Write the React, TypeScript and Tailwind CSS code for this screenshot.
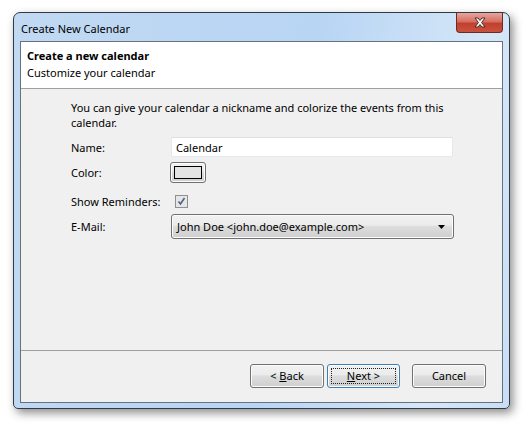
import React from "react";

function Win7Button({ children, focused, className = "" }: { children: React.ReactNode; focused?: boolean; className?: string }) {
  return (
    <div
      className={`relative flex items-center justify-center rounded-[3px] border ${
        focused ? "border-[#3c7fb1]" : "border-[#707070]"
      } bg-[linear-gradient(#f2f2f2_0%,#ebebeb_45%,#dddddd_50%,#cfcfcf_100%)] shadow-[inset_0_0_0_1px_#fcfcfc] ${className}`}
    >
      {focused && <div className="absolute inset-[3px] border border-dotted border-[#222]" />}
      {children}
    </div>
  );
}

export default function App() {
  return (
    <div className="w-[528px] h-[429px] bg-white font-['Noto_Sans',sans-serif] text-[11px] text-black overflow-hidden">
      <div className="relative ml-[13px] mt-[12px] w-[497px] h-[397px] rounded-t-[7px] rounded-b-[5px] border border-[#2f3a45] bg-[linear-gradient(100deg,#c1d9f2_0%,#b8d5f4_55%,#d6e7f8_85%,#c9def5_100%)] shadow-[3px_4px_10px_rgba(0,0,0,0.45)]">
        {/* title bar */}
        <div className="h-[28px] pl-[7px] pt-[8px] leading-[15px]">Create New Calendar</div>
        {/* close button */}
        <div className="absolute top-[0px] right-[6px] w-[47px] h-[20px] rounded-b-[4px] border border-t-0 border-[#6b2a22] bg-[linear-gradient(#e9a69b_0%,#d66f61_45%,#c0402f_55%,#c9523f_100%)] flex items-center justify-center">
          <svg width="14" height="11" viewBox="0 0 14 11">
            <path d="M2 1 L5 1 L7 3.5 L9 1 L12 1 L8.6 5.5 L12 10 L9 10 L7 7.5 L5 10 L2 10 L5.4 5.5 Z" fill="#fff" stroke="#4a2a2a" strokeWidth="1" strokeLinejoin="round" />
          </svg>
        </div>
        {/* client area */}
        <div className="mx-[6px] h-[362px] border border-[#66727f] bg-[#f0f0f0] flex flex-col">
          <div className="h-[47px] bg-white border-b border-[#a0a0a0] pl-[6px] pt-[5px] leading-[17px]">
            <div className="font-bold">Create a new calendar</div>
            <div>Customize your calendar</div>
          </div>
          <div className="h-[262px] border-b border-[#a0a0a0] pl-[50px] pr-[48px] pt-[11px] leading-[15px]">
            <p>You can give your calendar a nickname and colorize the events from this calendar.</p>
            <div className="mt-[7px] flex items-center h-[20px]">
              <div className="w-[100px]">Name:</div>
              <div className="w-[282px] h-[20px] bg-white border border-[#e3e9ef] border-t-[#dbe0e6] pl-[4px] flex items-center">Calendar</div>
            </div>
            <div className="mt-[5px] flex items-center h-[21px]">
              <div className="w-[99px]">Color:</div>
              <Win7Button className="w-[36px] h-[21px]">
                <div className="w-[28px] h-[13px] border border-black bg-[#e4e4e4]" />
              </Win7Button>
            </div>
            <div className="mt-[11px] flex items-center h-[14px]">
              <div className="w-[104px]">Show Reminders:</div>
              <div className="w-[13px] h-[13px] border border-[#8e8f8f] bg-[#e6e6e6] flex items-center justify-center">
                <svg width="9" height="9" viewBox="0 0 9 9">
                  <path d="M1.5 4.5 L3.5 7 L7.5 1" fill="none" stroke="#4d6185" strokeWidth="1.6" />
                </svg>
              </div>
            </div>
            <div className="mt-[6px] flex items-center h-[25px]">
              <div className="w-[100px]">E-Mail:</div>
              <Win7Button className="w-[283px] h-[25px] !justify-between pl-[5px] pr-[8px]">
                <span>John Doe &lt;john.doe@example.com&gt;</span>
                <svg width="7" height="4" viewBox="0 0 7 4">
                  <path d="M0 0 L7 0 L3.5 4 Z" fill="#000" />
                </svg>
              </Win7Button>
            </div>
          </div>
          <div className="flex-1 flex justify-end pt-[13px] pr-[16px]">
            <Win7Button className="w-[74px] h-[24px]">
              <span>&lt; <u>B</u>ack</span>
            </Win7Button>
            <Win7Button focused className="ml-[3px] w-[73px] h-[24px]">
              <span><u>N</u>ext &gt;</span>
            </Win7Button>
            <Win7Button className="ml-[12px] w-[74px] h-[24px]">
              <span>Cancel</span>
            </Win7Button>
          </div>
        </div>
      </div>
    </div>
  );
}
